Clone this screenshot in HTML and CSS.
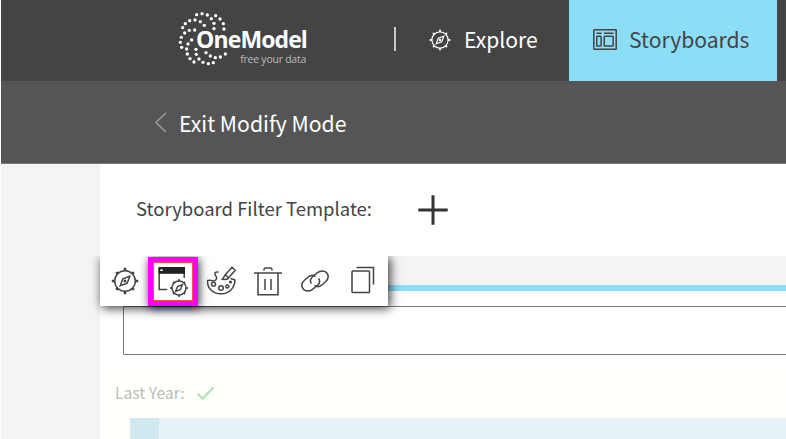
FILE: index.html
```html
<!DOCTYPE html>
<html lang="en">
  <head>
    <meta charset="utf-8">
    <title>OneModel - Storyboards</title>
    <link rel="stylesheet" href="styles.css">
  </head>
  <body>
    <svg class="defs">
      <defs>
        <symbol id="compass" viewBox="0 0 28 28">
          <circle cx="14" cy="14" r="10.3" />
          <path d="M14 0.8v3M14 24.2v3M0.8 14h3M24.2 14h3M5.2 5.2l1.6 1.6M21.2 21.2l1.6 1.6M5.2 22.8l1.6-1.6M21.2 6.8l1.6-1.6" stroke-width="2.6" />
          <path d="M18.8 9.2l-2.6 7-7 2.6 2.6-7z" />
          <circle cx="14" cy="14" r="0.8" />
        </symbol>
      </defs>
    </svg>
    <header class="navbar">
      <div class="logo">
        <svg class="logo-dots" width="52" height="56" viewBox="0 0 156 168">
          <g id="dots"></g>
        </svg>
        <div class="logo-name">OneModel</div>
        <div class="logo-tag">free your data</div>
      </div>
      <div class="divider"></div>
      <a class="nav-item explore">
        <svg class="icon" width="22" height="22"><use href="#compass" /></svg>
        <span>Explore</span>
      </a>
      <a class="nav-item storyboards">
        <svg class="icon" width="24" height="21" viewBox="0 0 24 21">
          <rect x="0.8" y="0.8" width="22.4" height="19.4" rx="0.5" />
          <path d="M3.5 4.3h5M11 4.3h9.5" />
          <rect x="3.7" y="7.2" width="4.4" height="9.8" rx="0.8" />
          <rect x="11.2" y="7.2" width="9" height="9.8" rx="0.8" />
        </svg>
        <span>Storyboards</span>
      </a>
    </header>
    <div class="modify-bar">
      <svg class="back" width="12" height="21" viewBox="0 0 12 21"><path d="M11 1L1 10.5l10 9.5" /></svg>
      <span>Exit Modify Mode</span>
    </div>
    <main class="page">
      <div class="filter-row">
        <span>Storyboard Filter Template:</span>
        <svg class="plus" width="30" height="30" viewBox="0 0 30 30"><path d="M15 0.300v29.400M0.300 15h29.400" /></svg>
      </div>
      <section class="tile">
        <div class="toolbar">
          <svg class="icon" width="28" height="28"><use href="#compass" /></svg>
          <div class="selected">
            <svg class="icon" width="32" height="32" viewBox="0 0 32 32">
              <path d="M2.2 2v21.6h8M27.2 7v5" />
              <rect class="solid" x="1.5" y="1" width="26.5" height="6.8" />
              <path class="light" d="M3.2 4.2h2.6" />
              <circle cx="22" cy="22" r="7" />
              <path d="M22 13.2v1.8M22 29v1.8M13.2 22h1.8M29 22h1.8M16 16l1 1M27 27l1 1M16 28l1-1M27 17l1-1" stroke-width="2" />
              <path d="M25.4 18.6l-1.9 4.9-4.900 1.900 1.900-4.900z" />
            </svg>
          </div>
          <svg class="icon palette" width="32" height="32" viewBox="0 0 32 32">
            <path d="M13.500 7H12c-2.800 0-2.400 2.100-1.300 3.600 1.500 2.200 1.300 4.400-1.500 5.200-2.300.6-3.700-1.300-6.500-.3-1 7.500 5 13.300 13.300 13.300s13.600-5.600 14-13.800l-4.500-1.500" />
            <path d="M20.300 9.800L27 2.300l3.300 2.900-6.700 7.500zM20.300 9.800c-1.500 1-1.200 3.400-3 4.300 2.300.8 5.100.3 6.300-1.400" />
            <circle cx="8.500" cy="19.300" r="2" />
            <circle cx="16" cy="23" r="2.300" />
            <circle cx="22.300" cy="21.500" r="1.500" />
            <circle cx="25.500" cy="17" r="0.800" />
          </svg>
          <svg class="icon" width="30" height="32" viewBox="0 0 30 32">
            <path d="M1 8.1h28M5 8.5v21.3h20V8.5M11 5.500V4.500q0-1.6 1.6-1.6h4.8Q19 2.900 19 4.500V5.500M12 14v11M18 14v11" />
          </svg>
          <svg class="icon link" width="28" height="22" viewBox="0 0 28 22">
            <path d="M10.500 13.500C8.500 11 9.500 8.500 11.500 6.700L16.500 2.700C19.500.3 24 .3 26 3.200s1 6.300-1.500 8.600L20.500 15.200C18.500 16.800 15.500 16.800 13.500 15.300" />
            <path d="M17.500 8.500C19.500 11 18.500 13.500 16.500 15.300L11.500 19.300C8.500 21.700 4 21.700 2 18.800s-1-6.300 1.500-8.600L7.500 6.800C9.500 5.200 12.500 5.200 14.500 6.700" />
          </svg>
          <svg class="icon copy" width="24" height="28" viewBox="0 0 24 28">
            <rect x="1" y="5" width="17.500" height="21.500" rx="0.800" />
            <path d="M5.500 1.600h17v16.900" />
          </svg>
        </div>
        <div class="tab-strip"></div>
        <div class="input-box"></div>
        <div class="compare">
          <div class="last-year">
            <span>Last Year:</span>
            <svg width="19" height="14" viewBox="0 0 19 14"><path d="M1.500 7.500l5 5L17.500 1.500" /></svg>
          </div>
          <div class="chart"><div class="chart-head"></div></div>
        </div>
      </section>
    </main>
    <script>
      // dotted swirl of the logo, one list per arm
      var arms = [
        [95,44, 111,41, 127,45, 139,56, 147,70, 147,86],
        [152,47, 165,57, 175,71, 177,87],
        [118,76, 106,65, 90,60, 74,62, 61,71, 53,83],
        [89,90, 73,91, 59,99, 49,112, 46,127, 50,142],
        [80,120, 69,132, 65,147, 67,162, 75,176, 87,186],
        [93,148, 94,163, 102,177, 114,187, 130,191, 145,188],
        [123,158, 136,168, 151,173, 166,171, 181,162]
      ];
      var out = "";
      arms.forEach(function(arm) {
        for (var i = 0; i < arm.length; i += 2) {
          out += '<circle cx="' + (arm[i] - 36) + '" cy="' + (arm[i + 1] - 30) + '" r="5" />';
        }
      });
      document.getElementById("dots").innerHTML = out;
    </script>
  </body>
</html>
```
FILE: styles.css
```css
* {
  box-sizing: border-box;
}

body {
  margin: 0;
  width: 786px;
  height: 439px;
  overflow: hidden;
  border-left: 1px solid #fff;
  background: #f4f4f4;
  color: #444;
  font-family: "Noto Sans CJK SC", "Noto Sans", sans-serif;
}

.defs {
  position: absolute;
  width: 0;
  height: 0;
}

svg {
  display: block;
  flex: none;
  fill: none;
  stroke: currentColor;
}

.icon {
  stroke-width: 1.5;
}

.solid {
  fill: #222;
  stroke: none;
}

.light {
  stroke: #fff;
}

span {
  white-space: nowrap;
}

.navbar {
  display: flex;
  height: 81px;
  background: #444;
  color: #fff;
}

.logo {
  position: relative;
  width: 130px;
  margin-left: 176px;
  padding-top: 26px;
  font-family: "Open Sans", sans-serif;
  text-align: right;
}

.logo-dots {
  position: absolute;
  left: 0;
  top: 10px;
  fill: #fff;
  stroke: none;
}

.logo-name {
  position: relative;
  height: 26px;
  line-height: 26px;
  font-size: 23px;
  font-weight: 700;
  letter-spacing: -0.9px;
}

.logo-tag {
  height: 14px;
  padding-right: 1px;
  line-height: 14px;
  font-size: 10.5px;
  letter-spacing: -0.25px;
  color: #bbb;
}

.divider {
  width: 2px;
  height: 24px;
  margin: 27px 0 0 87px;
  background: #c8c8c8;
}

.nav-item {
  display: flex;
  align-items: center;
  font-size: 21.100px;
}

.nav-item span {
  margin-top: -3px;
}

.nav-item .icon {
  margin-top: -2px;
}

.explore {
  width: 173px;
  padding-left: 33px;
  gap: 13px;
}

.storyboards {
  width: 208px;
  padding-left: 24px;
  gap: 12px;
  background: #8cdef7;
  color: #444;
}

.modify-bar {
  display: flex;
  align-items: center;
  height: 83px;
  padding-left: 154px;
  gap: 12px;
  border-bottom: 1px solid #777;
  background: #555;
  color: #fff;
  font-size: 21.200px;
}

.back {
  color: #999;
  stroke-width: 1.6;
}

.page {
  height: 275px;
  margin-left: 99px;
  background: #fff;
}

.filter-row {
  display: flex;
  align-items: center;
  height: 92px;
  padding-left: 36px;
  gap: 46px;
  font-size: 18.500px;
}

.filter-row span {
  margin-top: -4px;
}

.plus {
  color: #333;
  stroke-width: 3;
}

.tile {
  position: relative;
}

.toolbar {
  position: absolute;
  left: 0;
  top: 0;
  display: flex;
  align-items: center;
  width: 288px;
  height: 50px;
  padding-left: 11px;
  background: #fff;
  box-shadow: 2px 2px 10px rgba(0, 0, 0, 0.8);
  clip-path: inset(0 -20px -20px -20px);
}

.selected {
  display: flex;
  align-items: center;
  justify-content: center;
  width: 50px;
  height: 49px;
  margin: 1px 7px 0 9px;
  border: 5px solid #f0f;
  outline: 1px solid #f0544c;
  outline-offset: -6px;
  background: #fff;
  box-shadow: 1px 2px 9px rgba(0, 0, 0, 0.8);
}

.palette {
  margin-right: 16px;
}

.link {
  margin: 0 22px 0 18px;
}

.copy {
  margin-top: -2px;
}

.tab-strip {
  height: 35px;
  border-bottom: 6px solid #8cdef7;
  background: #f4f4f4;
}

.input-box {
  height: 49px;
  margin: 15px 0 15px 23px;
  border: 1.5px solid #777;
  border-right: 0;
  border-radius: 2px 0 0 2px;
}

.compare {
  height: 69px;
  background: #fffffb;
}

.last-year {
  display: flex;
  align-items: center;
  height: 48px;
  padding-left: 15px;
  gap: 11px;
  color: #bbb;
  font-size: 15.700px;
}

.last-year span {
  margin-top: -3px;
}

.last-year svg {
  margin-top: -2px;
  color: #afe5b5;
  stroke-width: 2.4;
}

.chart {
  height: 21px;
  margin-left: 30px;
  background: #e6f2f5;
}

.chart-head {
  width: 29px;
  height: 100%;
  background: #d0e8ef;
}
```
